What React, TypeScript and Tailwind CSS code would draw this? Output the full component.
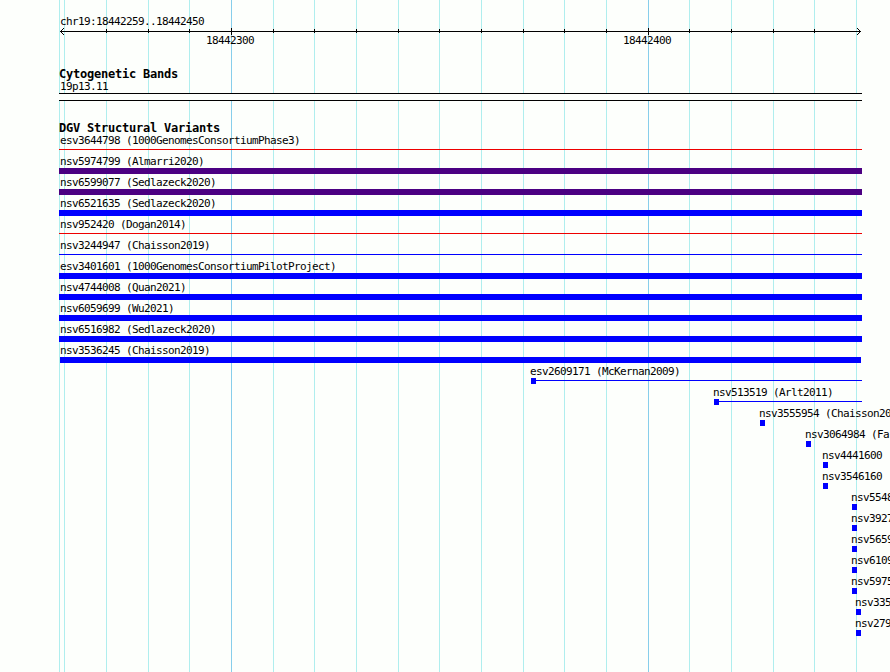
import { clsx } from 'clsx';

type Variant = {
  label: string;
  start: number;
  end: number;
  kind: 'line' | 'bar' | 'box';
  color: string;
};

const LEFT = 59;
const RIGHT = 862;

const MINOR = [106, 148, 189, 273, 314, 356, 398, 439, 481, 523, 564, 606, 689, 731, 773, 814];
const MAJOR = [231, 648];
const EDGES = [59, 64, 856];

const BLUE = 'bg-[#0000ff]';
const INDIGO = 'bg-[#4b0082]';
const RED = 'bg-[#ee0000]';

const variants: Variant[] = [
  { label: 'esv3644798 (1000GenomesConsortiumPhase3)', start: LEFT, end: RIGHT, kind: 'line', color: RED },
  { label: 'nsv5974799 (Almarri2020)', start: LEFT, end: RIGHT, kind: 'bar', color: INDIGO },
  { label: 'nsv6599077 (Sedlazeck2020)', start: LEFT, end: RIGHT, kind: 'bar', color: INDIGO },
  { label: 'nsv6521635 (Sedlazeck2020)', start: LEFT, end: RIGHT, kind: 'bar', color: BLUE },
  { label: 'nsv952420 (Dogan2014)', start: LEFT, end: RIGHT, kind: 'line', color: RED },
  { label: 'nsv3244947 (Chaisson2019)', start: LEFT, end: RIGHT, kind: 'line', color: BLUE },
  { label: 'esv3401601 (1000GenomesConsortiumPilotProject)', start: LEFT, end: RIGHT, kind: 'bar', color: BLUE },
  { label: 'nsv4744008 (Quan2021)', start: LEFT, end: RIGHT, kind: 'bar', color: BLUE },
  { label: 'nsv6059699 (Wu2021)', start: LEFT, end: RIGHT, kind: 'bar', color: BLUE },
  { label: 'nsv6516982 (Sedlazeck2020)', start: LEFT, end: RIGHT, kind: 'bar', color: BLUE },
  { label: 'nsv3536245 (Chaisson2019)', start: 60, end: 861, kind: 'bar', color: BLUE },
  { label: 'esv2609171 (McKernan2009)', start: 531, end: RIGHT, kind: 'box', color: BLUE },
  { label: 'nsv513519 (Arlt2011)', start: 714, end: RIGHT, kind: 'box', color: BLUE },
  { label: 'nsv3555954 (Chaisson20', start: 760, end: 765, kind: 'box', color: BLUE },
  { label: 'nsv3064984 (Fa', start: 806, end: 811, kind: 'box', color: BLUE },
  { label: 'nsv4441600', start: 823, end: 828, kind: 'box', color: BLUE },
  { label: 'nsv3546160', start: 823, end: 828, kind: 'box', color: BLUE },
  { label: 'nsv5548', start: 852, end: 857, kind: 'box', color: BLUE },
  { label: 'nsv3927', start: 852, end: 857, kind: 'box', color: BLUE },
  { label: 'nsv5659', start: 852, end: 857, kind: 'box', color: BLUE },
  { label: 'nsv6109', start: 852, end: 857, kind: 'box', color: BLUE },
  { label: 'nsv5975', start: 852, end: 857, kind: 'box', color: BLUE },
  { label: 'nsv335', start: 856, end: 861, kind: 'box', color: BLUE },
  { label: 'nsv279', start: 856, end: 861, kind: 'box', color: BLUE },
];

function GridLines() {
  return (
    <svg className="absolute inset-0 -z-10" width="890" height="672" shapeRendering="crispEdges">
      {[...EDGES, ...MINOR].map((x) => (
        <rect key={x} x={x} y="0" width="1" height="672" fill="#afeeee" />
      ))}
      {MAJOR.map((x) => (
        <rect key={x} x={x} y="0" width="1" height="672" fill="#87ceeb" />
      ))}
    </svg>
  );
}

function Ruler() {
  return (
    <div>
      <div className="h-[13px] pl-[60px] leading-[13px]">chr19:18442259..18442450</div>
      <svg className="block" width="890" height="7" shapeRendering="crispEdges">
        <rect x="60" y="3" width="801" height="1" />
        {MINOR.map((x) => (
          <rect key={x} x={x} y="1" width="1" height="4" />
        ))}
        {MAJOR.map((x) => (
          <rect key={x} x={x} y="0" width="1" height="7" />
        ))}
        {[0, 1, 2, 3].map((d) => (
          <g key={d}>
            <rect x={60 + d} y={3 - d} width="1" height="1" />
            <rect x={60 + d} y={3 + d} width="1" height="1" />
            <rect x={860 - d} y={3 - d} width="1" height="1" />
            <rect x={860 - d} y={3 + d} width="1" height="1" />
          </g>
        ))}
      </svg>
      <div className="-mt-px flex h-[13px] leading-[13px]">
        <span className="ml-[206px] w-[417px]">18442300</span>
        <span>18442400</span>
      </div>
    </div>
  );
}

function TrackTitle({ children }: { children: string }) {
  return (
    <h2 className="h-3 pl-[59px] text-[12px] font-bold leading-[13px] tracking-[-0.225px]">{children}</h2>
  );
}

function VariantRow({ variant }: { variant: Variant }) {
  const { label, start, end, kind, color } = variant;
  const labelX = kind === 'box' ? start - 1 : 60;

  return (
    <div className="h-[21px]">
      <div className="h-[13px] leading-[13px]" style={{ paddingLeft: labelX }}>
        {label}
      </div>
      <div className="flex h-1.5 items-start" style={{ marginLeft: start, width: end - start }}>
        {kind === 'box' && <div className={clsx('h-1.5 w-[5px]', color)} />}
        <div className={clsx('flex-1', color, kind === 'bar' ? 'h-1.5' : 'mt-0.5 h-px')} />
      </div>
    </div>
  );
}

export default function App() {
  return (
    <div className="relative isolate h-[672px] w-[890px] overflow-hidden whitespace-nowrap bg-[#fdfffc] pt-[15px] font-['DejaVu_Sans_Mono',monospace] text-[11px] tracking-[-0.623px] text-black">
      <GridLines />
      <Ruler />

      <section className="mt-[21px]">
        <TrackTitle>Cytogenetic Bands</TrackTitle>
        <div className="h-[13px] pl-[60px] leading-[13px]">19p13.11</div>
        <div className="ml-[59px] h-2 w-[803px] border-y border-black bg-[#fdfffc]" />
      </section>

      <section className="mt-[21px]">
        <TrackTitle>DGV Structural Variants</TrackTitle>
        {variants.map((variant) => (
          <VariantRow key={variant.label} variant={variant} />
        ))}
      </section>
    </div>
  );
}
